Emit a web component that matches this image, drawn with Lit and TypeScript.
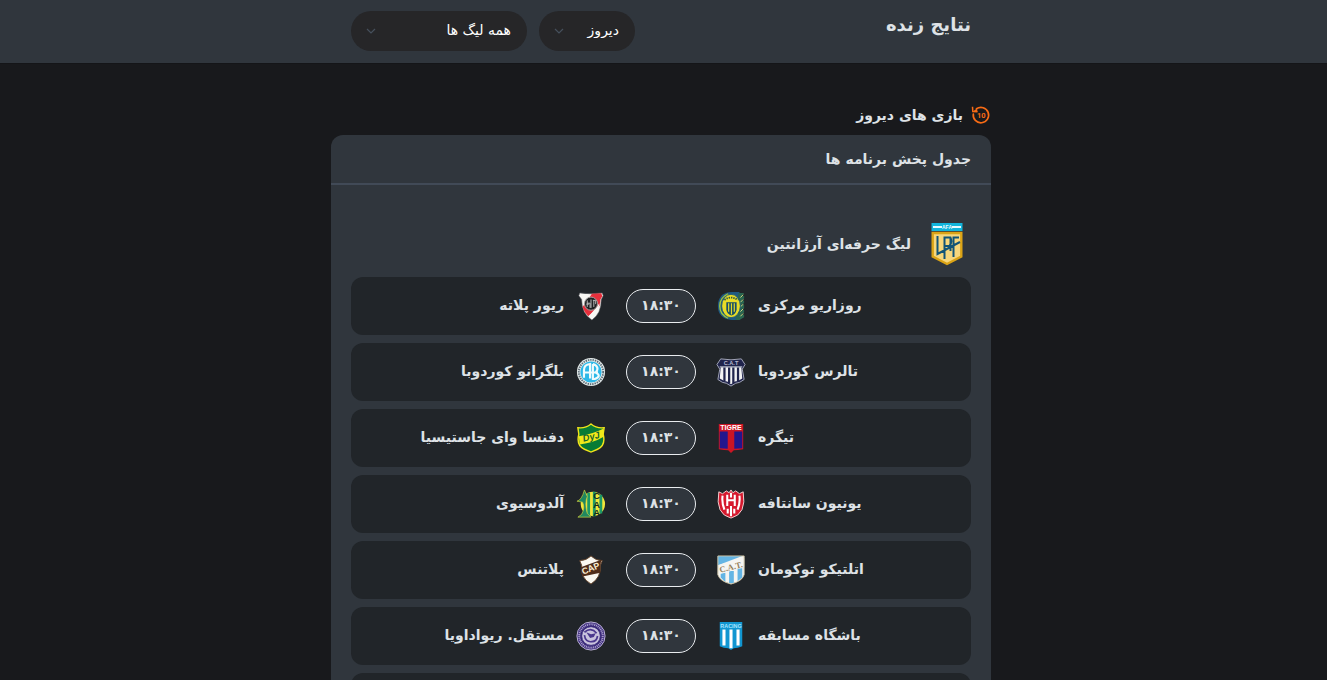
import { LitElement, html, css, svg, nothing } from "lit";
import { customElement, property } from "lit/decorators.js";

const crests: Record<string, unknown> = {
  rosario: svg`
    <path d="M17 1C7 1 2 7 2 16s5 14 15 15h8V1z" fill="#1f5a82"/>
    <path d="M24 2h6l-3 4 3-1v3l-3 2 3 0v3l-3 2 3 0v3l-3 2 3 0v3l-3 2 3 0v3l-5 3h-4z" fill="#2a6650"/>
    <path d="M26 7l3-3M26 12l3-3M26 17l3-3M26 22l3-3M26 27l3-3" stroke="#d7dc83"/>
    <path d="M13 3C6 6 4 11 4 16s2 10 9 13" fill="none" stroke="#9fc53c" stroke-width="1.5"/>
    <ellipse cx="16" cy="16" rx="10" ry="12.5" fill="#e8dc27" stroke="#1c5976"/>
    <path d="M9 9.500q7-5 14 0" fill="none" stroke="#315b43" stroke-width="2" stroke-dasharray="1.500 1"/>
    <path d="M11 12h11v8q-1 5-5.500 6-4.500-1-5.500-6z" fill="#174f68"/>
    <path d="M13.500 13v9M16.500 13v12M19.500 13v9" stroke="#e1d929" stroke-width="1.300"/>`,
  river: svg`
    <path d="M4 2q12 2 24 0l1 3-2 4q0 15-10 22Q6 24 6 9L3 5z" fill="#f8f7f4" stroke="#55585c" stroke-width=".6"/>
    <path d="M17 3q5 0 10-.5l1 3-2 3.500q0 4-1 7L13 27q-4-4-6-10z" fill="#e72f3c"/>
    <path d="M25 13q-1 10-8 17-2-1-3-3z" fill="#f8f7f4"/>
    <circle cx="16" cy="13.500" r="7" fill="#202224" stroke="#a8a6a4"/>
    <path d="M12 10v7m0-4h3v5m1-9v9m3-8v7m-8-3h3m4-4h3v4" fill="none" stroke="#bebfc0"/>`,
  talleres: svg`
    <path d="M5 2q11 2 22 0l4 6-3 5 2 11q-5 4-9 4l-5 3-5-3q-4 0-9-4l2-11-3-5z" fill="#20244c" stroke="#a9acbf"/>
    <path d="M5 11h22l1 12q-4 3-8 3l-4 3-4-3q-4 0-8-3z" fill="#f2f2f3"/>
    <path d="M9 11v15M14 11v17M18.500 11v17M23.500 11v15" stroke="#20244c" stroke-width="2.400"/>
    <path d="M4 10.500h24" stroke="#d0d3df"/>
    <text x="16" y="8.500" font-size="6" text-anchor="middle" font-weight="700" fill="#b6b8d0">C.A.T</text>`,
  belgrano: svg`
    <circle cx="16" cy="16" r="15" fill="#e5ebea"/>
    <circle cx="16" cy="16" r="13" fill="none" stroke="#5d6e78" stroke-width="2" stroke-dasharray="1.500 1"/>
    <circle cx="16" cy="16" r="11.300" fill="#2db8e8"/>
    <path d="M8.500 22V14q0-6 6.500-6.500V23M8.500 16.500h15M18 7.500v16h2q8-3 1-7 5-6-3-9" fill="none" stroke="#f0fbfc" stroke-width="2.300"/>`,
  tigre: svg`
    <path d="M3 1h26v27q-6 1-10 1l-3 3-3-3q-4 0-10-1z" fill="#cb1524"/>
    <path d="M4 9h8.500v18.500L4 27zM19.500 9H28v18l-8.500.5z" fill="#22168c"/>
    <text x="16" y="7.500" font-size="7.500" font-weight="700" text-anchor="middle" fill="#fff">TIGRE</text>`,
  defensa: svg`
    <path d="M2 5q8 1 14-4 6 5 14 4l-1 7q3 12-6 16l-7 3-7-3Q0 24 3 12z" fill="#087b35" stroke="#f2e51a" stroke-width="1.500"/>
    <path d="M3 14q14-2 26-8v9q-10 6-25 8z" fill="#f1e919"/>
    <text x="16" y="18" transform="rotate(-14 16 14)" font-size="10" font-style="italic" font-weight="700" text-anchor="middle" fill="#17632f">DyJ</text>`,
  union: svg`
    <path d="M3 3l4 2 4-3 3 2 2-3 2 3 3-2 4 3 4-2q4 24-13 28Q-1 27 3 3z" fill="#d6192e" stroke="#f2d8d8"/>
    <path d="M7 7q-1 8 2 15M12 6v12M20 6v12M25 7q1 8-2 15M12 12h8M16 4v5M16 18v11M12.500 21v5M19.500 21v5" fill="none" stroke="#fff" stroke-width="2.200"/>`,
  aldosivi: svg`
    <circle cx="18" cy="16" r="13" fill="#f1e63a"/>
    <path d="M12 4h3v25h-3zM18 3h3v26h-3zM25 6h3v20h-3z" fill="#1d9a67"/>
    <path d="M1 13q5-1 8-12l3 7q-3 7 0 18l4 4H2l4-3q4-7 1-13z" fill="#208760" stroke="#d4cf3a" stroke-width=".7"/>
    <g font-size="10" font-weight="700" text-anchor="middle" fill="#132a22"><text x="22" y="11">C</text><text x="22" y="20">A</text><text x="22" y="29">A</text></g>`,
  tucuman: svg`
    <path d="M2 1h28v20q-2 7-14 10Q4 28 2 21z" fill="#f5f5f2"/>
    <path d="M2 1h26L2 11zM5 19h5v10l-5-5zM14 17h5v13h-5zM23 14h5v10l-5 4z" fill="#64b5e4"/>
    <path d="M2 11L30 3v10L2 21" fill="#f5f5f2"/>
    <path d="M2 1h28v20q-2 7-14 10Q4 28 2 21z" fill="none" stroke="#d0c5a7"/>
    <text x="16" y="16" transform="rotate(-14 16 13)" font-size="9" font-family="Liberation Serif, serif" font-weight="700" text-anchor="middle" fill="#94805a">C.A.T.</text>`,
  platense: svg`
    <path d="M4 6q7 0 12-5 5 5 12 5l-2 5q1 13-10 20Q4 24 6 11z" fill="#faf8f1" stroke="#69482f"/>
    <path d="M5 13L27 5l-1 6v8L7 23q-2-4-2-10z" fill="#502d1a"/>
    <text x="16" y="17.500" transform="rotate(-22 16 15)" font-size="9.500" font-weight="700" text-anchor="middle" fill="#fbefd3">CAP</text>`,
  racing: svg`
    <path d="M4 1h24v26q-5 2-9 2l-3 2-3-2q-5 0-9-2z" fill="#1196d1"/>
    <path d="M8.500 9v17M16 9v20M23.500 9v17" stroke="#fff" stroke-width="3.300"/>
    <text x="16" y="7" font-size="5.800" font-weight="700" text-anchor="middle" fill="#a6e4ff">RACING</text>`,
  rivadavia: svg`
    <circle cx="16" cy="16" r="15" fill="#382778" stroke="#c6bddf"/>
    <circle cx="16" cy="16" r="12.500" fill="none" stroke="#a99dcc" stroke-width="2.200" stroke-dasharray="1.200 .8"/>
    <circle cx="16" cy="16" r="10" fill="#c9c2dd" stroke="#382778"/>
    <path d="M9 12q7-6 13 1M9 15q1 8 8 7 5 0 6-6" fill="none" stroke="#4b378d" stroke-width="1.800"/>
    <path d="M11 12l5 2 5-1-2 4-4 1z" fill="#4b378d"/>`,
};

interface Match {
  home: string;
  homeCrest: string;
  away: string;
  awayCrest: string;
  time: string;
}

const matches: Match[] = [
  { home: "روزاریو مرکزی", homeCrest: "rosario", away: "ریور پلاته", awayCrest: "river", time: "۱۸:۳۰" },
  { home: "تالرس کوردوبا", homeCrest: "talleres", away: "بلگرانو کوردوبا", awayCrest: "belgrano", time: "۱۸:۳۰" },
  { home: "تیگره", homeCrest: "tigre", away: "دفنسا وای جاستیسیا", awayCrest: "defensa", time: "۱۸:۳۰" },
  { home: "یونیون سانتافه", homeCrest: "union", away: "آلدوسیوی", awayCrest: "aldosivi", time: "۱۸:۳۰" },
  { home: "اتلتیکو توکومان", homeCrest: "tucuman", away: "پلاتنس", awayCrest: "platense", time: "۱۸:۳۰" },
  { home: "باشگاه مسابقه", homeCrest: "racing", away: "مستقل. ریواداویا", awayCrest: "rivadavia", time: "۱۸:۳۰" },
];

@customElement("team-crest")
export class TeamCrest extends LitElement {
  @property() name = "";

  static styles = css`
    :host { display: block; flex: none; width: 30px; height: 30px; }
    .crest { display: block; width: 100%; height: 100%; font-family: "Liberation Sans", sans-serif; }
  `;

  render() {
    return html`<svg class="crest" viewBox="0 0 32 32" direction="ltr" aria-hidden="true">${crests[this.name]}</svg>`;
  }
}

@customElement("match-row")
export class MatchRow extends LitElement {
  @property({ attribute: false }) match?: Match;

  static styles = css`
    :host { display: block; }
    .row {
      display: grid; grid-template-columns: minmax(0, 1fr) 70px minmax(0, 1fr);
      align-items: center; gap: 20px; min-height: 58px;
      background: #212529; border-radius: 12px;
    }
    .team { display: flex; align-items: center; gap: 12px; min-width: 0; }
    .home { justify-content: flex-end; }
    .name { white-space: nowrap; padding-bottom: 2px; }
    .time {
      box-sizing: border-box; height: 34px; line-height: 30px; text-align: center;
      border: 1px solid #e9ecef; border-radius: 17px; background: #30363d;
    }
  `;

  render() {
    const m = this.match;
    return html`<div class="row">${m
      ? html`
        <div class="team home"><span class="name">${m.home}</span><team-crest name=${m.homeCrest}></team-crest></div>
        <div class="time">${m.time}</div>
        <div class="team"><team-crest name=${m.awayCrest}></team-crest><span class="name">${m.away}</span></div>`
      : nothing}</div>`;
  }
}

@customElement("app-root")
export class AppRoot extends LitElement {
  static styles = css`
    :host {
      display: block; direction: rtl; height: 100vh; overflow: hidden;
      background: #18191c; color: #dee2e6;
      font-family: "DejaVu Sans", sans-serif; font-size: 14px; font-weight: 700; line-height: 24px;
    }
    .header, .content { padding-right: 5px; }
    .header { background: #30363d; border-bottom: 1px solid #141518; }
    .bar {
      box-sizing: border-box; max-width: 660px; min-height: 63px; margin: 0 auto; padding: 11px 20px;
      display: flex; justify-content: space-between; align-items: flex-start;
    }
    .title { margin: 0; font-size: 18px; line-height: 28px; font-weight: 700; }
    .filters { display: flex; gap: 12px; }
    .picker { display: grid; align-items: center; }
    .picker > * { grid-area: 1 / 1; }
    .select {
      appearance: none; width: 100%; height: 40px; padding: 0 16px 2px; border: 0; border-radius: 20px;
      background: #262628; color: #fff; font: 400 14px "DejaVu Sans", sans-serif;
    }
    .day { width: 96px; }
    .league-filter { width: 176px; }
    .chevron { justify-self: end; margin-inline-end: 15px; width: 10px; height: 6px; pointer-events: none; }
    .column { max-width: 660px; margin: 0 auto; padding-top: 39px; }
    .day-title { display: flex; align-items: center; gap: 8px; margin: 0; padding-bottom: 8px; font-size: 14px; line-height: 24px; }
    .clock { width: 20px; height: 20px; }
    .panel { background: #30363d; border-radius: 12px 12px 0 0; }
    .panel-title { margin: 0; padding: 12px 20px; font-size: 14px; line-height: 24px; border-bottom: 2px solid #414a57; }
    .panel-body { padding: 34px 20px 20px; }
    .league { display: flex; align-items: center; gap: 16px; padding: 0 4px 8px; margin: 0; font-size: 14px; }
    .badge { width: 40px; height: 50px; }
    .rows { display: grid; gap: 8px; }
  `;

  private chevron() {
    return html`<svg class="chevron" viewBox="0 0 10 6" aria-hidden="true"><path d="M1 1l4 4 4-4" fill="none" stroke="#46505c" stroke-width="1.2"/></svg>`;
  }

  render() {
    return html`
      <header class="header"><div class="bar">
        <h1 class="title">نتایج زنده</h1>
        <div class="filters">
          <label class="picker day"><select class="select" aria-label="روز"><option>دیروز</option></select>${this.chevron()}</label>
          <label class="picker league-filter"><select class="select" aria-label="لیگ"><option>همه لیگ ها</option></select>${this.chevron()}</label>
        </div>
      </div></header>
      <main class="content"><div class="column">
        <h2 class="day-title">
          <svg class="clock" viewBox="0 0 20 20" aria-hidden="true">
            <path d="M5.500 3.800A7.700 7.700 0 1 1 2.300 9" fill="none" stroke="#f76b15" stroke-width="1.700" stroke-linecap="round"/>
            <path d="M1.500 1.800l.3 4.700 4.700.2" fill="none" stroke="#f76b15" stroke-width="1.500"/>
            <path d="M2 6.300l4-2.900.5 3.300z" fill="#f76b15"/>
            <text x="10.300" y="13" text-anchor="middle" direction="ltr" font-family="Roboto, sans-serif" font-size="7.500" font-weight="700" fill="#f76b15">10</text>
          </svg>
          <span>بازی های دیروز</span>
        </h2>
        <section class="panel">
          <h3 class="panel-title">جدول پخش برنامه ها</h3>
          <div class="panel-body">
            <h4 class="league">
              <svg class="badge" viewBox="0 0 40 50" aria-hidden="true">
                <path d="M4.500 4h31v8h-31z" fill="#12b5dc"/>
                <path d="M6 8h9M25 8h9" stroke="#e7fbff" stroke-width="2"/>
                <text x="20" y="10" text-anchor="middle" direction="ltr" font-family="Liberation Sans, sans-serif" font-size="5" font-weight="700" fill="#e7fbff">AFA</text>
                <path d="M5.700 14h28.600v23.500L20 45 5.700 37.500z" fill="#f7d77c" stroke="#dba416" stroke-width="2.400"/>
                <path d="M10.500 17v18L33 23M17.500 40V18.500h6q2 5-1 8.500h-5M26.500 38V18.500H32M23.500 19v13" fill="none" stroke="#125477" stroke-width="2"/>
              </svg>
              <span>لیگ حرفه‌ای آرژانتین</span>
            </h4>
            <div class="rows">${matches.map((m) => html`<match-row .match=${m}></match-row>`)}<match-row></match-row></div>
          </div>
        </section>
      </div></main>`;
  }
}
